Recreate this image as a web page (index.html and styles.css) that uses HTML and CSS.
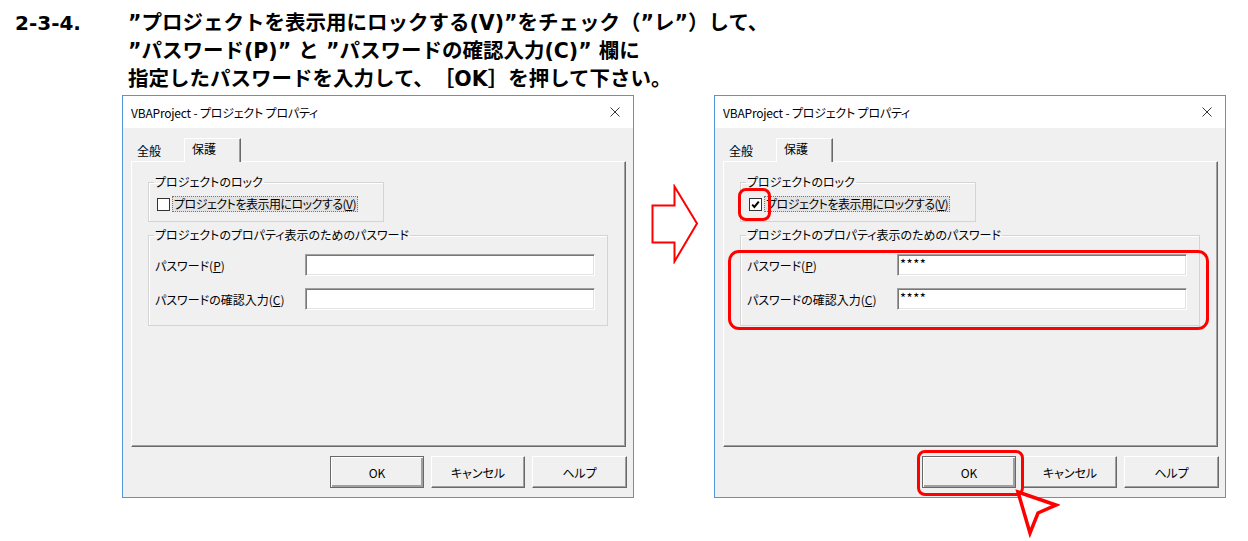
FILE: index.html
```html
<!doctype html>
<html lang="ja">
<head>
<meta charset="utf-8">
<title>プロジェクト プロパティ - 保護</title>
<link rel="stylesheet" href="styles.css">
</head>
<body>

<div class="step">
	<div class="step-no">2-3-4.</div>
	<div class="step-text">
		<p>”プロジェクトを表示用にロックする(V)”をチェック（”レ”）して、</p>
		<p>”パスワード(P)” と ”パスワードの確認入力(C)” 欄に</p>
		<p>指定したパスワードを入力して、［OK］を押して下さい。</p>
	</div>
</div>

<div class="figure">
	<div class="dialog">
		<div class="titlebar">
			<span>VBAProject - プロジェクト プロパティ</span>
			<svg class="close" width="10" height="10" viewBox="0 0 10 10"><path d="M0.5 0.5 L9.5 9.5 M9.5 0.5 L0.5 9.5" stroke="#333" stroke-width="1" fill="none"/></svg>
		</div>
		<div class="body">
			<div class="tabs">
				<div class="tab">全般</div>
				<div class="tab tab--active">保護</div>
			</div>
			<div class="panel">
				<fieldset class="group group--lock">
					<legend>プロジェクトのロック</legend>
					<div class="check-row">
						<span class="checkbox"></span>
						<span class="check-label">プロジェクトを表示用にロックする(<u>V</u>)</span>
					</div>
				</fieldset>
				<fieldset class="group group--pass">
					<legend>プロジェクトのプロパティ表示のためのパスワード</legend>
					<div class="field-row">
						<span class="field-label">パスワード(<u>P</u>)</span>
						<span class="field"></span>
					</div>
					<div class="field-row">
						<span class="field-label">パスワードの確認入力(<u>C</u>)</span>
						<span class="field"></span>
					</div>
				</fieldset>
			</div>
			<div class="buttons">
				<span class="btn btn--default">OK</span>
				<span class="btn">キャンセル</span>
				<span class="btn btn--wide">ヘルプ</span>
			</div>
		</div>
	</div>

	<svg class="arrow" width="50" height="80" viewBox="0 0 50 80">
		<polygon points="2.5,21.5 24.5,21.5 24.5,2.5 47,39.5 24.5,77.5 24.5,58.5 2.5,58.5" fill="#fff" stroke="#ff0000" stroke-width="2"/>
	</svg>

	<div class="dialog dialog--done">
		<div class="titlebar">
			<span>VBAProject - プロジェクト プロパティ</span>
			<svg class="close" width="10" height="10" viewBox="0 0 10 10"><path d="M0.5 0.5 L9.5 9.5 M9.5 0.5 L0.5 9.5" stroke="#333" stroke-width="1" fill="none"/></svg>
		</div>
		<div class="body">
			<div class="tabs">
				<div class="tab">全般</div>
				<div class="tab tab--active">保護</div>
			</div>
			<div class="panel">
				<fieldset class="group group--lock">
					<legend>プロジェクトのロック</legend>
					<div class="check-row">
						<span class="checkbox"><svg width="11" height="11" viewBox="0 0 11 11"><path d="M2.2 5.6 L4.4 8 L8.8 2.6" stroke="#000" stroke-width="2" fill="none"/></svg></span>
						<span class="check-label">プロジェクトを表示用にロックする(<u>V</u>)</span>
					</div>
				</fieldset>
				<fieldset class="group group--pass">
					<legend>プロジェクトのプロパティ表示のためのパスワード</legend>
					<div class="field-row">
						<span class="field-label">パスワード(<u>P</u>)</span>
						<span class="field">****</span>
					</div>
					<div class="field-row">
						<span class="field-label">パスワードの確認入力(<u>C</u>)</span>
						<span class="field">****</span>
					</div>
				</fieldset>
			</div>
			<div class="buttons">
				<span class="btn btn--default">OK</span>
				<span class="btn">キャンセル</span>
				<span class="btn btn--wide">ヘルプ</span>
			</div>
		</div>

		<!-- red markers over the screenshot -->
		<span class="mark mark--check"></span>
		<span class="mark mark--pass"></span>
		<span class="mark mark--ok"></span>
		<svg class="pointer" width="46" height="50" viewBox="0 0 46 50">
			<polygon points="4,4 42,17 24,25 16,45" fill="#fff" stroke="#ff0000" stroke-width="3.5" stroke-linejoin="miter"/>
		</svg>
	</div>
</div>

</body>
</html>
```

FILE: styles.css
```css
html, body {
	margin: 0;
	min-height: 541px;
	background: #fff;
	color: #000;
}

.step {
	display: flex;
	padding: 9px 0 0 15px;
	font-family: "DejaVu Sans", "Noto Sans CJK JP", sans-serif;
	font-weight: bold;
	font-size: 20.5px;
	line-height: 28px;
	text-spacing-trim: space-all;
}

.step-no {
	width: 113px;
	flex: none;
	font-size: 20px;
}

.step-text p {
	margin: 0;
	white-space: nowrap;
}

.figure {
	display: flex;
	align-items: flex-start;
	padding: 2px 0 44px 122px;
}

.dialog {
	position: relative;
	width: 512px;
	height: 403px;
	box-sizing: border-box;
	border: 1px solid #5596d8;
	background: #f0f0f0;
	font-family: "Noto Sans CJK JP", sans-serif;
	font-size: 12px;
	font-feature-settings: "palt";
	flex: none;
}

.dialog--done {
	margin-left: 14px;
}

.arrow {
	flex: none;
	margin: 89px 0 0 16px;
}

.titlebar {
	display: flex;
	align-items: center;
	justify-content: space-between;
	height: 32px;
	padding: 0 13px 0 8px;
	background: #fff;
}

.titlebar span {
	letter-spacing: -0.2px;
}

.body {
	padding: 10px 6px 0 8px;
}

.tabs {
	display: flex;
	align-items: flex-end;
	height: 23px;
}

.tab {
	width: 47px;
	height: 21px;
	padding-left: 6px;
	line-height: 21px;
}

.tab--active {
	position: relative;
	z-index: 1;
	width: 57px;
	height: 24px;
	margin-bottom: -1px;
	padding-left: 7px;
	line-height: 20px;
	background: #f0f0f0;
	border-top: 1px solid #fff;
	border-left: 1px solid #fff;
	border-right: 1px solid #696969;
	box-shadow: inset -1px 0 #a0a0a0;
	box-sizing: border-box;
}

.panel {
	height: 286px;
	margin-right: 1px;
	box-sizing: border-box;
	padding: 13px 0 0 16px;
	border: 1px solid;
	border-color: #fff #696969 #696969 #fff;
	box-shadow: inset -1px -1px #a0a0a0;
}

.group {
	margin: 0;
	padding: 0;
	min-width: 0;
	border: 1px solid #d4d4d4;
	box-shadow: inset 1px 1px #fff;
	box-sizing: border-box;
}

.group legend {
	margin-left: 5px;
	padding: 0 1px;
	line-height: 14px;
}

.group--lock {
	width: 236px;
	padding-bottom: 9px;
}

.group--pass {
	width: 460px;
	margin-top: 6px;
	padding-bottom: 15px;
}

.check-row {
	display: flex;
	align-items: center;
	height: 16px;
	margin-top: 7px;
	padding-left: 8px;
}

.checkbox {
	display: flex;
	align-items: center;
	justify-content: center;
	width: 13px;
	height: 13px;
	box-sizing: border-box;
	border: 1px solid #333;
	background: #fff;
}

.check-label {
	margin-left: 2px;
	padding: 0 1px;
	line-height: 14px;
	letter-spacing: -0.5px;
	border: 1px dotted #777;
	background: #e3e3e3;
}

.field-row {
	display: flex;
	align-items: center;
	margin-top: 12px;
	padding-left: 6px;
}

.field-label {
	width: 150px;
}

.field {
	display: block;
	width: 290px;
	height: 22px;
	box-sizing: border-box;
	padding-left: 2px;
	line-height: 17px;
	font-size: 13px;
	letter-spacing: 0.5px;
	background: #fff;
	border: 1px solid;
	border-color: #a0a0a0 #fff #fff #a0a0a0;
	box-shadow: inset 1px 1px #777, inset -1px -1px #e3e3e3;
}

.buttons {
	display: flex;
	justify-content: flex-end;
	gap: 7px;
	margin-top: 9px;
}

.btn {
	width: 94px;
	height: 32px;
	box-sizing: border-box;
	display: flex;
	align-items: center;
	justify-content: center;
	background: #f0f0f0;
	border: 1px solid;
	border-color: #fff #696969 #696969 #fff;
	box-shadow: inset -1px -1px #a0a0a0;
}

.btn--default {
	border-color: #696969;
	box-shadow: inset 1px 1px #fff, inset -2px -2px #a0a0a0;
}

.btn--wide {
	width: 95px;
}

.mark {
	position: absolute;
	box-sizing: border-box;
	border: 3px solid #ff0000;
	border-radius: 8px;
}

.mark--check {
	left: 23px;
	top: 92px;
	width: 33px;
	height: 33px;
}

.mark--pass {
	left: 13px;
	top: 154px;
	width: 481px;
	height: 80px;
	border-radius: 11px;
}

.mark--ok {
	left: 202px;
	top: 354px;
	width: 107px;
	height: 46px;
}

.pointer {
	position: absolute;
	left: 299px;
	top: 392px;
}
```
